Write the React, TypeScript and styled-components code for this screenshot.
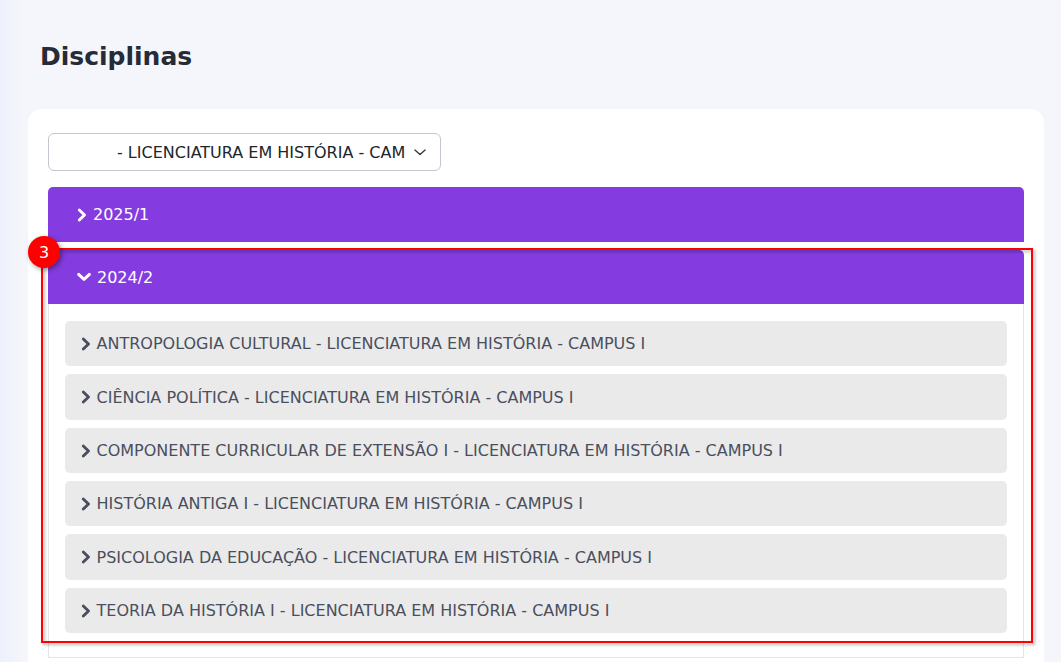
import React from "react";
import styled, { createGlobalStyle } from "styled-components";

const Global = createGlobalStyle`
  html, body { margin: 0; padding: 0; height: 100%; overflow: hidden; }
  body { background: #f5f6fb; font-family: "DejaVu Sans", sans-serif; }
`;

const Page = styled.div`
  height: 662px;
  overflow: hidden;
  padding: 0 17px 0 28px;
  background: linear-gradient(90deg, #eef1fb 0, #f5f6fb 24px);
`;

const Title = styled.h1`
  margin: 0;
  padding: 42px 0 0 12px;
  height: 109px;
  box-sizing: border-box;
  font-size: 25px;
  line-height: 30px;
  font-weight: 700;
  color: #252b37;
`;

const Card = styled.div`
  background: #fff;
  border-radius: 14px 14px 0 0;
  padding: 24px 20px 20px;
`;

const SelectBox = styled.div`
  width: 393px;
  height: 38px;
  box-sizing: border-box;
  border: 1px solid #c3c7cf;
  border-radius: 6px;
  background: #fff;
  display: flex;
  align-items: center;
  padding: 0 13px 0 68px;
  gap: 8px;
  font-size: 16px;
  color: #212529;
  margin-bottom: 16px;
  white-space: nowrap;
`;

const Item = styled.div`
  position: relative;
  margin-bottom: 8px;
`;

const Header = styled.div<{ $open?: boolean }>`
  height: ${(p) => (p.$open ? 54 : 55)}px;
  box-sizing: border-box;
  background: #843ce0;
  border-radius: 5px 5px 0 0;
  color: #fff;
  display: flex;
  align-items: center;
  padding-left: 28px;
  gap: ${(p) => (p.$open ? 5 : 6)}px;
  font-size: 16px;
`;

const Panel = styled.div`
  border: 1px solid #e6e6e6;
  border-top: none;
  padding: 17px 16px 24px;
  display: flex;
  flex-direction: column;
  gap: 8px;
`;

const Row = styled.div`
  height: 45.33px;
  box-sizing: border-box;
  background: #eaeaea;
  border-radius: 5px;
  display: flex;
  align-items: center;
  padding: 0.4px 0 0 15px;
  gap: 5.5px;
  font-size: 16px;
  color: #4a4f5e;
  white-space: nowrap;
`;

const Highlight = styled.div`
  position: absolute;
  left: -7px;
  top: -2px;
  width: 992px;
  height: 395px;
  box-sizing: border-box;
  border: 2px solid #ff0000;
  filter: drop-shadow(2px 2px 1.5px rgba(0, 0, 0, 0.3));
  pointer-events: none;
`;

const Badge = styled.div`
  position: absolute;
  left: -20px;
  top: -14px;
  width: 32px;
  height: 32px;
  border-radius: 50%;
  background: #ff0000;
  color: #fff;
  font-size: 16px;
  display: flex;
  align-items: center;
  justify-content: center;
  box-shadow: 2px 2px 5px rgba(0, 0, 0, 0.4);
`;

const Chevron = ({ dir }: { dir: "right" | "down" }) => (
  <svg width={dir === "right" ? 11 : 16} height={16} viewBox={dir === "right" ? "0 0 11 16" : "0 0 16 16"} fill="none" stroke="currentColor" strokeWidth="2.9" strokeLinecap="round" strokeLinejoin="round" style={{ flex: "none" }}>
    <path d={dir === "right" ? "M3.3 3 8.5 8 3.3 13" : "M2.6 5.4 8 10.4 13.4 5.4"} />
  </svg>
);

const SelectCaret = () => (
  <svg width="14" height="14" viewBox="0 0 16 16" fill="none" stroke="#343a40" strokeWidth="1.6" strokeLinecap="round" strokeLinejoin="round" style={{ flex: "none" }}>
    <path d="M2.2 5.6 8 10.8l5.8-5.2" />
  </svg>
);

const courses = [
  "ANTROPOLOGIA CULTURAL - LICENCIATURA EM HISTÓRIA - CAMPUS I",
  "CIÊNCIA POLÍTICA - LICENCIATURA EM HISTÓRIA - CAMPUS I",
  "COMPONENTE CURRICULAR DE EXTENSÃO I - LICENCIATURA EM HISTÓRIA - CAMPUS I",
  "HISTÓRIA ANTIGA I - LICENCIATURA EM HISTÓRIA - CAMPUS I",
  "PSICOLOGIA DA EDUCAÇÃO - LICENCIATURA EM HISTÓRIA - CAMPUS I",
  "TEORIA DA HISTÓRIA I - LICENCIATURA EM HISTÓRIA - CAMPUS I",
];

export default function App() {
  return (
    <Page>
      <Global />
      <Title>Disciplinas</Title>
      <Card>
        <SelectBox>
          <span>- LICENCIATURA EM HISTÓRIA - CAM</span>
          <SelectCaret />
        </SelectBox>
        <Item>
          <Header>
            <Chevron dir="right" />
            2025/1
          </Header>
        </Item>
        <Item>
          <Header $open>
            <Chevron dir="down" />
            2024/2
          </Header>
          <Panel>
            {courses.map((c) => (
              <Row key={c}>
                <Chevron dir="right" />
                {c}
              </Row>
            ))}
          </Panel>
          <Highlight />
          <Badge>3</Badge>
        </Item>
      </Card>
    </Page>
  );
}
